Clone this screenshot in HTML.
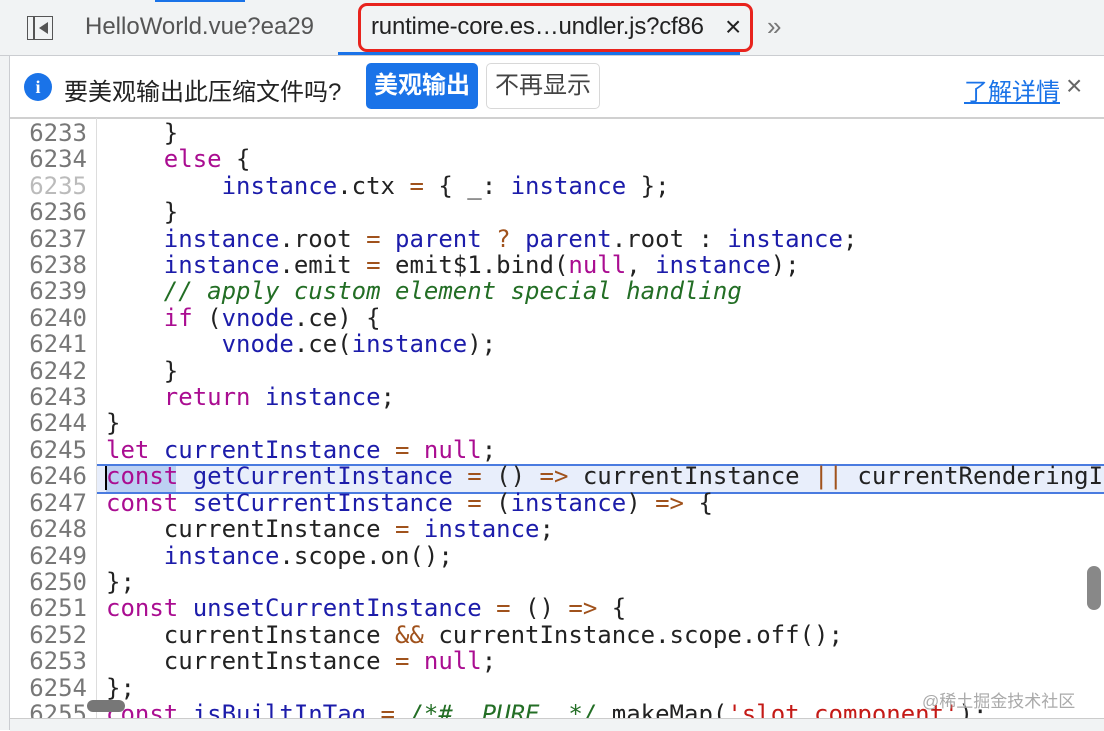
<html><head><style>
body{margin:0;width:1104px;height:730px;overflow:hidden;background:#fff;font-family:"Liberation Sans","Noto Sans CJK SC",sans-serif;position:relative}
.abs{position:absolute}
#tabs{left:0;top:0;width:1104px;height:55px;background:#f1f3f4;border-bottom:1px solid #cbcdd1}
#info{left:10px;top:56px;width:1094px;height:61px;background:#fff;border-bottom:2px solid #d0d0d0}
#left{left:0;top:56px;width:9px;height:674px;background:#f1f3f4;border-right:1px solid #cbcdd1}
.code{font-family:"DejaVu Sans Mono",monospace;font-size:24px;line-height:26.4px;white-space:pre}
#nums{left:10px;top:120px;width:77px;text-align:right;color:#777}
#gut{left:96px;top:118px;width:1px;height:600px;background:#ddd}
#src{left:106px;top:120px;color:#222}
.k{color:#aa0d91}.v{color:#1c1caa}.o{color:#a0521c}.c{color:#236e25;font-style:italic}.s{color:#c41a16}
#bottom{left:10px;top:718px;width:1094px;height:12px;background:#f1f3f4;border-top:1px solid #ccc}
</style></head><body>
<div class="abs" id="tabs"></div>
<div class="abs" style="left:155px;top:0;width:90px;height:2px;background:#1a73e8"></div>
<div class="abs" style="left:27px;top:16px;width:26px;height:24px;border:1.5px solid #555;box-sizing:border-box"></div>
<div class="abs" style="left:33px;top:16px;width:1.5px;height:24px;background:#555"></div>
<div class="abs" style="left:39px;top:22px;width:0;height:0;border-top:6px solid transparent;border-bottom:6px solid transparent;border-right:9px solid #555"></div>
<div class="abs" style="left:85px;top:13px;font-size:24px;color:#555">HelloWorld.vue?ea29</div>
<div class="abs" style="left:338px;top:52px;width:402px;height:3px;background:#1a73e8"></div>
<div class="abs" style="left:358px;top:3px;width:395px;height:49px;border:3px solid #e8231d;border-radius:9px;box-sizing:border-box;background:#f1f3f4"></div>
<div class="abs" style="left:371px;top:13px;font-size:24px;color:#222;letter-spacing:-0.2px">runtime-core.es…undler.js?cf86</div>
<div class="abs" style="left:725px;top:11px;font-size:28px;color:#222">×</div>
<div class="abs" style="left:767px;top:11px;font-size:26px;color:#777">»</div>
<div class="abs" id="info"></div>
<div class="abs" style="left:24px;top:73px;width:28px;height:28px;border-radius:50%;background:#1a73e8;color:#fff;font-weight:bold;font-size:18px;text-align:center;line-height:28px;font-family:'Liberation Serif',serif">i</div>
<div class="abs" style="left:64px;top:72px;font-size:24px;color:#222">要美观输出此压缩文件吗?</div>
<div class="abs" style="left:366px;top:63px;width:112px;height:46px;background:#1a73e8;border-radius:5px;color:#fff;font-size:24px;line-height:46px;text-align:center;font-weight:bold">美观输出</div>
<div class="abs" style="left:486px;top:63px;width:114px;height:46px;border:1px solid #d8d8d8;border-radius:5px;box-sizing:border-box;color:#444;font-size:24px;line-height:44px;text-align:center">不再显示</div>
<div class="abs" style="left:964px;top:72px;font-size:24px;color:#1a73e8;text-decoration:underline">了解详情</div>
<div class="abs" style="left:1066px;top:70px;font-size:28px;color:#666">×</div>
<div class="abs" id="left"></div>
<div class="abs" style="left:97px;top:464px;width:1007px;height:26px;background:#e8eefb;border-top:2px solid #4a7be0;border-bottom:2px solid #4a7be0"></div>
<div class="abs" style="left:106px;top:466px;width:70px;height:26px;background:#bcd0f2"></div>
<div class="abs" id="gut"></div>
<div class="abs code" id="nums">6233
6234
<span style="color:#bbb">6235</span>
6236
6237
6238
6239
6240
6241
6242
6243
6244
6245
6246
6247
6248
6249
6250
6251
6252
6253
6254
6255</div>
<div class="abs code" id="src">    }
    <span class="k">else</span> {
        <span class="v">instance</span>.ctx <span class="o">=</span> { _: <span class="v">instance</span> };
    }
    <span class="v">instance</span>.root <span class="o">=</span> <span class="v">parent</span> <span class="o">?</span> <span class="v">parent</span>.root : <span class="v">instance</span>;
    <span class="v">instance</span>.emit <span class="o">=</span> emit$1.bind(<span class="k">null</span>, <span class="v">instance</span>);
    <span class="c">// apply custom element special handling</span>
    <span class="k">if</span> (<span class="v">vnode</span>.ce) {
        <span class="v">vnode</span>.ce(<span class="v">instance</span>);
    }
    <span class="k">return</span> <span class="v">instance</span>;
}
<span class="k">let</span> <span class="v">currentInstance</span> <span class="o">=</span> <span class="k">null</span>;
<span class="k">const</span> <span class="v">getCurrentInstance</span> <span class="o">=</span> () <span class="o">=></span> currentInstance <span class="o">||</span> currentRenderingIn
<span class="k">const</span> <span class="v">setCurrentInstance</span> <span class="o">=</span> (<span class="v">instance</span>) <span class="o">=></span> {
    currentInstance <span class="o">=</span> <span class="v">instance</span>;
    <span class="v">instance</span>.scope.on();
};
<span class="k">const</span> <span class="v">unsetCurrentInstance</span> <span class="o">=</span> () <span class="o">=></span> {
    currentInstance <span class="o">&amp;&amp;</span> currentInstance.scope.off();
    currentInstance <span class="o">=</span> <span class="k">null</span>;
};
<span class="k">const</span> <span class="v">isBuiltInTag</span> <span class="o">=</span> <span class="c">/*#__PURE__*/</span> makeMap(<span class="s">'slot,component'</span>);</div>
<div class="abs" style="left:105px;top:466px;width:2px;height:24px;background:#000"></div>
<div class="abs" style="left:87px;top:700px;width:38px;height:12px;background:#777;border-radius:6px"></div>
<div class="abs" style="left:1087px;top:566px;width:14px;height:44px;background:#888;border-radius:7px"></div>
<div class="abs" style="left:922px;top:687px;font-size:17px;color:#aaa">@稀土掘金技术社区</div>
<div class="abs" id="bottom"></div>
</body></html>
